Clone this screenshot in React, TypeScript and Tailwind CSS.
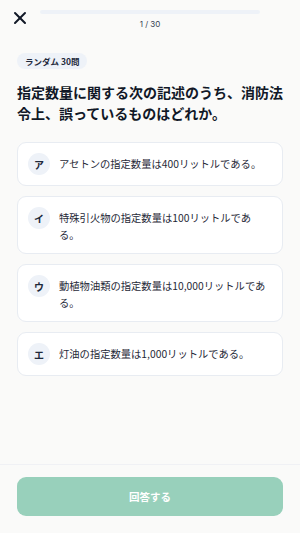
import { X } from "lucide-react";

const choices = [
  { key: "ア", text: "アセトンの指定数量は400リットルである。" },
  { key: "イ", text: "特殊引火物の指定数量は100リットルである。" },
  { key: "ウ", text: "動植物油類の指定数量は10,000リットルである。" },
  { key: "エ", text: "灯油の指定数量は1,000リットルである。" },
];

export default function App() {
  return (
    <div
      className="flex h-[533px] w-[300px] flex-col bg-[#fafaf9] text-[#1f2937]"
      style={{ fontFamily: '"Noto Sans CJK JP", "Noto Sans", sans-serif' }}
    >
      <header className="flex h-[40px] items-start px-[10px]">
        <button className="mt-[8px] flex h-[20px] w-[20px] items-center justify-center text-[#111827]">
          <X size={20} strokeWidth={2.4} />
        </button>
        <div className="ml-[10px] mr-[30px] flex flex-1 flex-col items-center pt-[10px]">
          <div className="h-[4px] w-full rounded-full bg-[#eef2f8]" />
          <span className="mt-[4px] font-['Inter',sans-serif] text-[8px] leading-[12px] text-[#374151]">
            1 / 30
          </span>
        </div>
      </header>

      <main className="flex-1 px-[17px] pt-[13px]">
        <div className="flex h-[16px] w-fit items-center rounded-full bg-[#eef2f8] px-[8px] text-[8.5px] font-semibold text-[#1e293b]">
          ランダム 30問
        </div>
        <h1 className="mt-[13px] text-[14px] font-bold leading-[21px] text-[#111827]">
          指定数量に関する次の記述のうち、消防法令上、誤っているものはどれか。
        </h1>

        <ul className="mt-[18px] flex flex-col gap-[10px]">
          {choices.map((c) => (
            <li
              key={c.key}
              className="flex items-start gap-[9px] rounded-[9px] border border-[#e8ecf2] bg-white py-[10px] pl-[10px] pr-[15px]"
            >
              <span className="flex h-[22px] w-[22px] shrink-0 items-center justify-center rounded-full bg-[#eef2f8] text-[10px] font-bold text-[#1e293b]">
                {c.key}
              </span>
              <p className="mt-[2px] flex-1 text-[10.3px] leading-[17px] text-[#1f2937]">{c.text}</p>
            </li>
          ))}
        </ul>
      </main>

      <footer className="border-t border-[#f0f1f5] px-[17px] pb-[17px] pt-[12px]">
        <button className="flex h-[39px] w-full items-center justify-center rounded-[9px] bg-[#98d0bb] text-[10.5px] font-bold text-white">
          回答する
        </button>
      </footer>
    </div>
  );
}
